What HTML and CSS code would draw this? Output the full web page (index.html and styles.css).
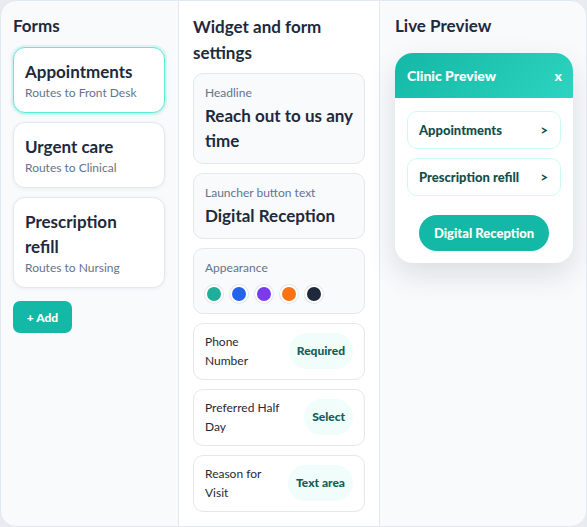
FILE: index.html
```html
<!DOCTYPE html>
<html lang="en">
<head>
  <meta charset="UTF-8">
  <meta name="viewport" content="width=device-width, initial-scale=1.0">
  <title>Widget builder</title>
  <link rel="stylesheet" href="styles.css">
</head>
<body>
  <div class="app">
    <aside class="col forms-col">
      <h2 class="col-title">Forms</h2>
      <div class="form-list">
        <div class="form-card active">
          <div class="form-name">Appointments</div>
          <div class="form-route">Routes to Front Desk</div>
        </div>
        <div class="form-card">
          <div class="form-name">Urgent care</div>
          <div class="form-route">Routes to Clinical</div>
        </div>
        <div class="form-card">
          <div class="form-name">Prescription refill</div>
          <div class="form-route">Routes to Nursing</div>
        </div>
      </div>
      <button class="add-btn">+ Add</button>
    </aside>

    <section class="col settings-col">
      <h2 class="col-title">Widget and form settings</h2>
      <div class="setting-list">
        <div class="setting-card">
          <div class="setting-label">Headline</div>
          <div class="setting-value">Reach out to us any time</div>
        </div>
        <div class="setting-card">
          <div class="setting-label">Launcher button text</div>
          <div class="setting-value">Digital Reception</div>
        </div>
        <div class="setting-card">
          <div class="setting-label">Appearance</div>
          <div class="swatches">
            <span class="swatch teal"></span>
            <span class="swatch blue"></span>
            <span class="swatch purple"></span>
            <span class="swatch orange"></span>
            <span class="swatch dark"></span>
          </div>
        </div>
        <div class="field-row">
          <span class="field-name">Phone Number</span>
          <span class="field-tag">Required</span>
        </div>
        <div class="field-row">
          <span class="field-name">Preferred Half Day</span>
          <span class="field-tag">Select</span>
        </div>
        <div class="field-row">
          <span class="field-name">Reason for Visit</span>
          <span class="field-tag">Text area</span>
        </div>
      </div>
    </section>

    <section class="col preview-col">
      <h2 class="col-title">Live Preview</h2>
      <div class="widget">
        <div class="widget-head">
          <span>Clinic Preview</span>
          <span class="widget-close">x</span>
        </div>
        <div class="widget-body">
          <div class="widget-item"><span>Appointments</span><span>&gt;</span></div>
          <div class="widget-item"><span>Prescription refill</span><span>&gt;</span></div>
          <button class="launcher">Digital Reception</button>
        </div>
      </div>
    </section>
  </div>
</body>
</html>
```

FILE: styles.css
```css
* {
  box-sizing: border-box;
}
html, body {
  margin: 0;
  padding: 0;
  background: #e8ecf0;
  font-family: Lato, "Noto Sans", sans-serif;
  color: #1e293b;
}
.app {
  height: 527px;
  display: grid;
  grid-template-columns: 178px 201px 1fr;
  border: 1px solid #e2e8f0;
  border-radius: 16px;
  overflow: hidden;
  background: #f8fafc;
}
.col {
  padding: 14px 13px;
}
.forms-col {
  padding-left: 12px;
  border-right: 1px solid #e5e7eb;
}
.settings-col {
  padding: 14px;
  background: #fff;
  border-right: 1px solid #e5e7eb;
}
.preview-col {
  padding: 14px 13px 14px 15px;
}
.col-title {
  margin: 0 0 10px;
  font-size: 17px;
  line-height: 22px;
  font-weight: 700;
  color: #1e293b;
}
.settings-col .col-title {
  margin-top: -1px;
  margin-bottom: 7px;
  line-height: 26px;
}
.preview-col .col-title {
  margin-bottom: 16px;
}

/* forms list */
.form-list {
  display: flex;
  flex-direction: column;
  gap: 9px;
}
.form-card {
  background: #fff;
  border: 1px solid #e5e7eb;
  border-radius: 12px;
  padding: 11px 11px;
  box-shadow: 0 1px 4px rgba(15, 23, 42, 0.06);
}
.form-card.active {
  border-color: #5eead4;
  box-shadow: 0 0 0 2px rgba(94, 234, 212, 0.18), 0 1px 4px rgba(20, 184, 166, 0.15);
}
.form-name {
  font-size: 17px;
  line-height: 25px;
  font-weight: 700;
}
.form-route {
  font-size: 12px;
  line-height: 17px;
  color: #64748b;
}
.add-btn {
  margin-top: 13px;
  width: 59px;
  height: 32px;
  border: 0;
  border-radius: 7px;
  background: #14b8a6;
  color: #fff;
  font-family: Lato, sans-serif;
  font-size: 12px;
  font-weight: 900;
  cursor: pointer;
}

/* settings */
.setting-list {
  display: flex;
  flex-direction: column;
  gap: 9px;
}
.setting-card {
  background: #f8fafc;
  border: 1px solid #e5e7eb;
  border-radius: 10px;
  padding: 10px 11px;
}
.setting-label {
  font-size: 12px;
  line-height: 17px;
  color: #64748b;
  margin-bottom: 2px;
}
.setting-value {
  font-size: 17px;
  line-height: 25px;
  font-weight: 700;
}
.swatches {
  display: flex;
  gap: 7px;
  margin-top: 9px;
}
.swatch {
  width: 18px;
  height: 18px;
  border-radius: 50%;
  border: 2px solid #fff;
  box-shadow: 0 0 0 1px #e5e7eb;
}
.swatch.teal { background: #1fae9a; }
.swatch.blue { background: #2563eb; }
.swatch.purple { background: #7c3aed; }
.swatch.orange { background: #f97316; }
.swatch.dark { background: #1e293b; }
.field-row {
  display: flex;
  align-items: center;
  gap: 8px;
  background: #fff;
  border: 1px solid #e5e7eb;
  border-radius: 10px;
  padding: 8px 11px 9px;
}
.field-name {
  flex: 1;
  font-size: 12px;
  line-height: 19px;
  color: #1f2937;
}
.field-tag {
  padding: 10px 8px;
  border-radius: 999px;
  background: #f0fdfa;
  color: #115e59;
  font-size: 12px;
  line-height: 16px;
  font-weight: 900;
}

/* preview */
.widget {
  background: #fff;
  border-radius: 18px;
  overflow: hidden;
  box-shadow: 0 12px 30px rgba(15, 23, 42, 0.12);
}
.widget-head {
  height: 45px;
  display: flex;
  align-items: center;
  justify-content: space-between;
  padding: 0 11px 0 12px;
  background: linear-gradient(135deg, #14b8a6, #2dd4bf);
  color: #fff;
  font-size: 14px;
  font-weight: 900;
}
.widget-close {
  font-size: 14px;
}
.widget-body {
  padding: 13px 12px 12px;
  display: flex;
  flex-direction: column;
  gap: 9px;
}
.widget-item {
  height: 38px;
  display: flex;
  align-items: center;
  justify-content: space-between;
  padding: 0 12px 0 11px;
  border: 1px solid #ccfbf1;
  border-radius: 10px;
  color: #134e4a;
  font-size: 13px;
  font-weight: 900;
}
.launcher {
  align-self: center;
  margin-top: 10px;
  width: 130px;
  height: 36px;
  border: 0;
  border-radius: 999px;
  background: #14b8a6;
  color: #fff;
  font-family: Lato, sans-serif;
  font-size: 13px;
  font-weight: 900;
}
```
